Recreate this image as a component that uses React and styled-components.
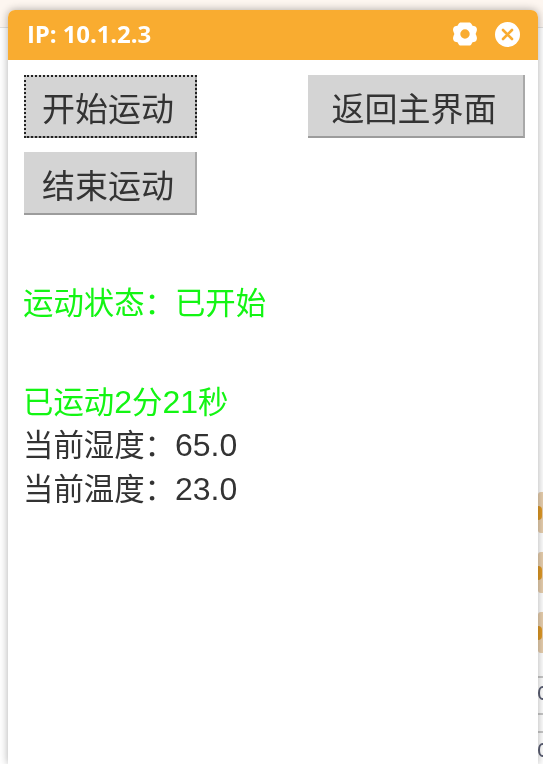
import React from "react";
import styled, { createGlobalStyle } from "styled-components";

const Global = createGlobalStyle`
  html, body { margin: 0; padding: 0; background: #fff; }
  body { width: 543px; height: 764px; overflow: hidden; font-family: "Noto Sans CJK SC", "Liberation Sans", sans-serif; }
`;

const Stage = styled.div`
  display: flex;
  width: 543px;
  height: 764px;
  padding: 10px 0 0 8px;
  box-sizing: border-box;
  overflow: hidden;
  background: linear-gradient(#fdf6f0 0 27px, #e2e0de 27px 28px, #fff 28px);
`;

const Strip = styled.aside`
  width: 5px;
  flex: none;
  overflow: hidden;
  display: flex;
  flex-direction: column;
  padding-top: 482px;
  filter: blur(0.6px);
`;

const Peek = styled.div`
  flex: none;
  width: 5px;
  height: 41px;
  margin-bottom: 19px;
  background: #e8cfae;
  border-radius: 3px 0 0 3px;
  display: flex;
  align-items: center;
  overflow: hidden;
`;

const PeekMark = styled.div`
  width: 4px;
  height: 14px;
  border-radius: 0 6px 6px 0;
  background: #e09a26;
`;

const Rule = styled.div`
  flex: none;
  height: 2px;
  background: #c8c8c8;
  margin-top: ${(p) => p.$gap}px;
`;

const Glyph = styled.div`
  flex: none;
  width: 9px;
  height: 14px;
  margin-top: ${(p) => p.$gap}px;
  border: 2px solid #5c6074;
  border-radius: 50%;
  box-sizing: border-box;
`;

const Window = styled.div`
  position: relative;
  z-index: 1;
  width: 530px;
  flex: none;
  height: 754px;
  background: #fff;
  border-radius: 7px 7px 0 0;
  box-shadow: 0 0 8px rgba(0, 0, 0, 0.32);
  display: flex;
  flex-direction: column;
  overflow: hidden;
`;

const TitleBar = styled.header`
  height: 50px;
  box-sizing: border-box;
  flex: none;
  background: #f9ac30;
  display: flex;
  align-items: center;
  padding: 0 18px 2px 19px;
  color: #fff;
`;

const Title = styled.div`
  flex: 1;
  font: 700 24px/1 "Open Sans", "Noto Sans", sans-serif;
  letter-spacing: -0.1px;
  filter: blur(0.3px);
`;

const Tools = styled.div`
  display: flex;
  align-items: center;
  gap: 17px;
`;

const Content = styled.main`
  flex: 1;
  padding: 15px 13px 0 16px;
  filter: blur(0.55px);
`;

const ButtonRow = styled.div`
  display: flex;
  justify-content: space-between;
  align-items: flex-start;
`;

const Button = styled.button`
  display: block;
  width: ${(p) => p.$w}px;
  height: 63px;
  margin: ${(p) => p.$mt || 0}px 0 0;
  padding: 4px 3px 0 0;
  background: #d4d4d4;
  border: 0;
  border-right: 2px solid #a9a9a9;
  border-bottom: 2px solid #9c9c9c;
  color: #333;
  font: 400 33px/1 "Noto Sans CJK SC", sans-serif;
  box-sizing: border-box;
  outline: ${(p) => (p.$focus ? "2px dotted #222" : "none")};
  outline-offset: -2px;
`;

const Readings = styled.section`
  margin: ${(p) => p.$mt}px 0 0 -1px;
`;

const Status = styled.p`
  margin: 0;
  font: 400 30.400px/43.500px "Noto Sans CJK SC", sans-serif;
  color: ${(p) => (p.$on ? "#13f513" : "#333")};
`;

const Num = styled.span`
  font-family: "Liberation Sans", sans-serif;
  font-size: 32px;
  line-height: 0;
`;

const Gear = () => (
  <svg width="26" height="24" viewBox="0 0 26 24" aria-hidden="true">
    <path
      fill="#fff"
      fillRule="evenodd"
      d="M9 .5h8c1.300 0 2 .7 2.500 1.600l1 1.700c1.800.1 3.200.6 4 2 .9 1.800.4 3.500-.9 6.200 1.300 2.700 1.800 4.400.9 6.200-.8 1.400-2.200 1.900-4 2l-1 1.700c-.5.900-1.200 1.600-2.500 1.600H9c-1.300 0-2-.7-2.500-1.600l-1-1.700c-1.800-.1-3.200-.6-4-2-.9-1.800-.4-3.500.9-6.200C1.100 9.300.6 7.600 1.500 5.800c.8-1.400 2.200-1.900 4-2l1-1.700C7 1.200 7.700.5 9 .5zM13 7.300a4.700 4.700 0 1 0 0 9.400 4.700 4.700 0 0 0 0-9.400z"
    />
  </svg>
);

const CloseIcon = () => (
  <svg width="25" height="25" viewBox="0 0 25 25" aria-hidden="true">
    <circle cx="12.500" cy="12.500" r="12.500" fill="#fff" />
    <path d="M8 8l9 9M17 8l-9 9" stroke="#f9ac30" strokeWidth="2.6" strokeLinecap="round" />
  </svg>
);

export default function App() {
  return (
    <Stage>
      <Global />
      <Window>
        <TitleBar>
          <Title>IP: 10.1.2.3</Title>
          <Tools>
            <Gear />
            <CloseIcon />
          </Tools>
        </TitleBar>
        <Content>
          <ButtonRow>
            <Button $w={173} $focus>开始运动</Button>
            <Button $w={217}>返回主界面</Button>
          </ButtonRow>
          <Button $w={173} $mt={14}>结束运动</Button>
          <Readings $mt={65}>
            <Status $on>运动状态：已开始</Status>
          </Readings>
          <Readings $mt={55}>
            <Status $on>已运动<Num>2</Num>分<Num>21</Num>秒</Status>
            <Status>当前湿度：<Num>65.0</Num></Status>
            <Status>当前温度：<Num>23.0</Num></Status>
          </Readings>
        </Content>
      </Window>
      <Strip>
        <Peek><PeekMark /></Peek>
        <Peek><PeekMark /></Peek>
        <Peek><PeekMark /></Peek>
        <Rule $gap={4} />
        <Glyph $gap={8} />
        <Rule $gap={13} />
        <Rule $gap={16} />
        <Glyph $gap={10} />
      </Strip>
    </Stage>
  );
}
